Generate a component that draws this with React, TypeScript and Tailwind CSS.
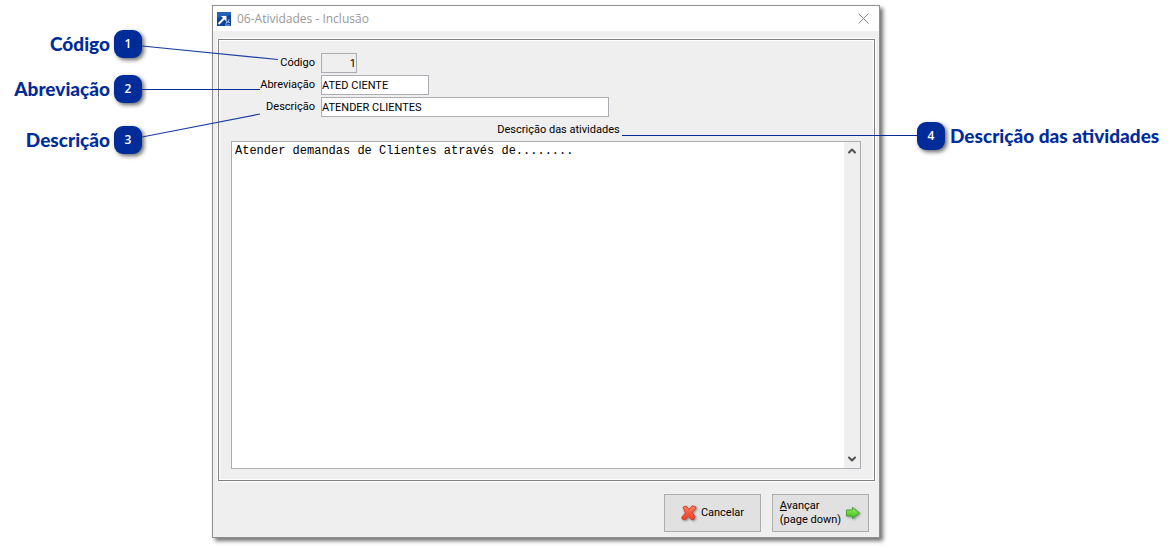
import type { ReactNode } from 'react';
import { ChevronDown, ChevronUp } from 'lucide-react';

interface Field {
  id: string;
  label: string;
  value: string;
  className: string;
  readOnly?: boolean;
}

const fields: Field[] = [
  { id: 'codigo', label: 'Código', value: '1', className: 'w-9 bg-[#efefef] text-right', readOnly: true },
  { id: 'abreviacao', label: 'Abreviação', value: 'ATED CIENTE', className: 'w-[108px] bg-white' },
  { id: 'descricao', label: 'Descrição', value: 'ATENDER CLIENTES', className: 'w-72 bg-white' },
];

function Badge({ children }: { children: ReactNode }) {
  return (
    <span className="flex size-7 shrink-0 items-center justify-center rounded-[9px] bg-[#002c9a] font-['Open_Sans',sans-serif] text-xs font-semibold text-white shadow-[2px_2px_4px_rgba(0,0,0,0.6)]">
      {children}
    </span>
  );
}

function Callout({ number, label }: { number: number; label: string }) {
  return (
    <div className="flex items-center justify-end gap-1">
      <span className="whitespace-nowrap">{label}</span>
      <Badge>{number}</Badge>
    </div>
  );
}

function AppIcon() {
  return (
    <svg viewBox="0 0 14 14" className="size-[14px]" aria-hidden="true">
      <rect width="14" height="14" fill="#0b459c" />
      <path d="M0 0h14v3L0 6z" fill="#2462b8" />
      <path d="M1.500 12 7.500 6" stroke="#fff" strokeWidth="2" />
      <path d="M4 4h5.500v5.500L8 8 5.500 5.500z" fill="#fff" />
      <path d="m9 12 1-3 1 2 1-4M8 13h5M11 9l2 2" fill="none" stroke="#9fc0e8" strokeWidth="0.9" />
    </svg>
  );
}

function CancelIcon() {
  return (
    <svg viewBox="0 0 16 16" className="size-4 shrink-0 drop-shadow-[1px_1px_1px_rgba(0,0,0,0.4)]" aria-hidden="true">
      <defs>
        <linearGradient id="cancel-fill" x1="0" y1="0" x2="0" y2="1">
          <stop offset="0" stopColor="#ff8565" />
          <stop offset="0.5" stopColor="#f8583a" />
          <stop offset="1" stopColor="#ee4526" />
        </linearGradient>
      </defs>
      <path
        d="M2 2 5.200 1 8 4.500 11 .8 14.600 1.600 14.800 3.400 11.200 7.600 14 11.500 12.900 14.400 10.200 14.600 7.300 11.200 4.500 14.800 1 13.900.9 12 4.300 8z"
        fill="url(#cancel-fill)"
        stroke="#c9361c"
        strokeWidth="0.8"
        strokeLinejoin="round"
      />
    </svg>
  );
}

function ForwardIcon() {
  return (
    <svg viewBox="0 0 16 16" className="size-4 shrink-0 drop-shadow-[1px_1px_1px_rgba(0,0,0,0.35)]" aria-hidden="true">
      <defs>
        <linearGradient id="forward-fill" x1="0" y1="0" x2="0" y2="1">
          <stop offset="0" stopColor="#a4ed70" />
          <stop offset="0.5" stopColor="#68d638" />
          <stop offset="1" stopColor="#42bd20" />
        </linearGradient>
      </defs>
      <path
        d="M1.500 5h6V2.300L14.500 8l-7 5.700V11h-6z"
        fill="url(#forward-fill)"
        stroke="#459a35"
        strokeWidth="0.9"
        strokeLinejoin="round"
      />
    </svg>
  );
}

function TitleBar() {
  return (
    <header className="flex h-[25px] items-center bg-white pl-1 pr-2">
      <AppIcon />
      <h1 className="ml-[6px] font-['Open_Sans','Noto_Sans',sans-serif] text-xs text-[#999]">06-Atividades - Inclusão</h1>
      <button type="button" aria-label="Fechar" className="ml-auto p-[2px]">
        <svg viewBox="0 0 11 11" className="size-[11px]" aria-hidden="true">
          <path d="m.5.5 10 10m0-10-10 10" stroke="#8c8c8c" />
        </svg>
      </button>
    </header>
  );
}

function ActivityForm() {
  return (
    <form className="flex flex-1 flex-col bg-[#efefef] pt-2 pr-1 pb-[5px] pl-[5px]" onSubmit={(e) => e.preventDefault()}>
      <div className="flex flex-1 flex-col border border-[#7f7f7f] px-3 pt-[13px] pb-[11px] shadow-[0_0_0_1px_#fff,inset_0_0_0_1px_#fff]">
        <div className="flex flex-col gap-[2px]">
          {fields.map((field) => (
            <div key={field.id} className="flex items-center gap-[6px]">
              <label htmlFor={field.id} className="w-[84px] text-right">
                {field.label}
              </label>
              <input
                id={field.id}
                defaultValue={field.value}
                readOnly={field.readOnly}
                className={`h-5 border border-[#abadb3] outline-none ${field.className}`}
              />
            </div>
          ))}
        </div>

        <div className="grid h-6 grid-cols-[1fr_auto_1fr] items-center gap-[2px] pt-px pl-6">
          <label htmlFor="atividades" className="col-start-2">
            Descrição das atividades
          </label>
          {/* connector from the label to badge 4, outside the window */}
          <div className="relative h-px">
            <span className="absolute top-1.5 left-0 -right-[56px] h-px bg-[#002c9a]" />
          </div>
        </div>

        <div className="mr-px flex flex-1 border border-[#abadb3] bg-white">
          <textarea
            id="atividades"
            defaultValue="Atender demandas de Clientes através de........"
            className="flex-1 resize-none px-[3px] py-px font-['Liberation_Mono',monospace] text-xs leading-4 outline-none"
          />
          <div className="flex w-4 flex-col justify-between bg-[#efefef] text-[#505050]">
            <button type="button" aria-label="Rolar para cima" className="flex h-[18px] items-center justify-center">
              <ChevronUp className="size-3" strokeWidth={4} />
            </button>
            <button type="button" aria-label="Rolar para baixo" className="flex h-[18px] items-center justify-center">
              <ChevronDown className="size-3" strokeWidth={4} />
            </button>
          </div>
        </div>
      </div>

      <div className="mt-[13px] flex justify-end gap-[11px] pr-[6px]">
        <button
          type="button"
          className="flex h-[38px] w-[97px] items-center justify-center gap-1 border border-[#adadad] bg-[#e1e1e1]"
        >
          <CancelIcon />
          Cancelar
        </button>
        <button
          type="submit"
          className="flex h-[38px] w-[97px] items-center justify-center gap-1 border border-[#adadad] bg-[#e1e1e1] text-left leading-[14px] whitespace-nowrap"
        >
          <span>
            <u>A</u>vançar
            <br />
            (page down)
          </span>
          <ForwardIcon />
        </button>
      </div>
    </form>
  );
}

export default function App() {
  return (
    <div className="flex min-h-screen bg-white pt-[5px] pb-[11px] font-['Lato',sans-serif] text-[19px] leading-7 font-black text-[#002c9a]">
      <aside className="relative z-10 flex w-[212px] shrink-0 flex-col pt-[25px] pr-[70px]">
        <Callout number={1} label="Código" />
        <div className="mt-[17px]">
          <Callout number={2} label="Abreviação" />
        </div>
        <div className="mt-[23px]">
          <Callout number={3} label="Descrição" />
        </div>
        <svg
          viewBox="0 0 136 110"
          className="pointer-events-none absolute top-[35px] left-[142px] h-[110px] w-[136px]"
          fill="none"
          stroke="#1c3f9f"
          strokeWidth="1.2"
          aria-hidden="true"
        >
          <path d="M0 6 136 19.500M0 97 118 74" />
          <path d="M0 49.500h118" stroke="#002c9a" strokeWidth="1" />
        </svg>
      </aside>

      <main className="flex min-w-0 flex-1 flex-col border border-[#8f8f8f] font-['Roboto',sans-serif] text-[11px] leading-[14px] font-normal text-black shadow-[3px_3px_4px_rgba(0,0,0,0.55)]">
        <TitleBar />
        <ActivityForm />
      </main>

      <aside className="relative z-10 w-[296px] shrink-0 pt-[117px] pl-[37px]">
        <div className="flex items-center gap-[5px]">
          <Badge>4</Badge>
          <span className="whitespace-nowrap">Descrição das atividades</span>
        </div>
      </aside>
    </div>
  );
}
